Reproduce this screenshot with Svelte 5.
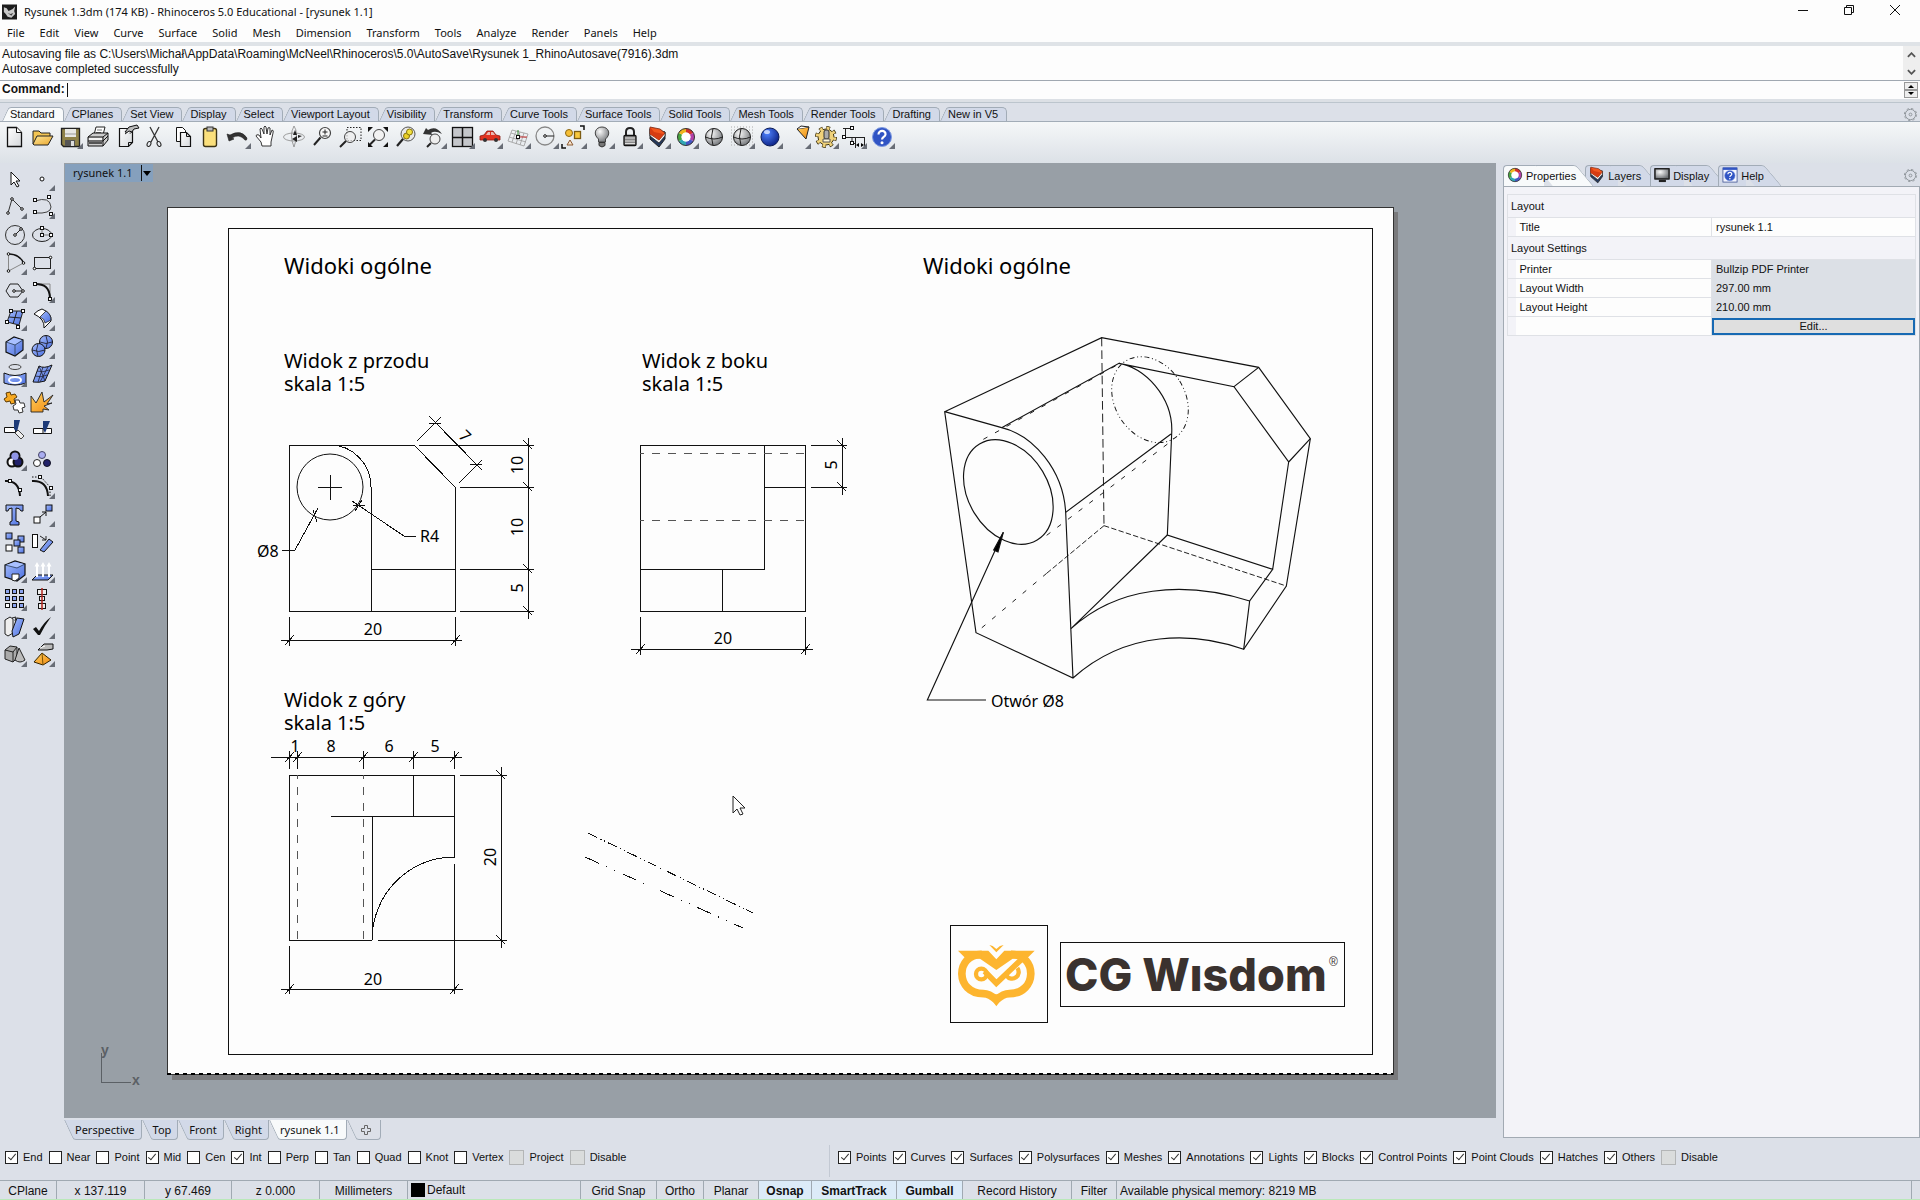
<script>
  const menus = ['File', 'Edit', 'View', 'Curve', 'Surface', 'Solid', 'Mesh', 'Dimension', 'Transform', 'Tools', 'Analyze', 'Render', 'Panels', 'Help'];

  const toolTabs = ['Standard', 'CPlanes', 'Set View', 'Display', 'Select', 'Viewport Layout', 'Visibility', 'Transform', 'Curve Tools', 'Surface Tools', 'Solid Tools', 'Mesh Tools', 'Render Tools', 'Drafting', 'New in V5'];

  const viewTabs = ['Perspective', 'Top', 'Front', 'Right', 'rysunek 1.1'];

  const wheel = `<g fill="none" stroke-width="4"><path stroke="#d3322c" d="M14 7.5a6.5 6.5 0 0 1 5.600 3.200"/><path stroke="#b23fa8" d="M19.600 10.700a6.500 6.500 0 0 1 0 6.600"/><path stroke="#4656c4" d="M19.600 17.300a6.500 6.500 0 0 1-5.600 3.200"/><path stroke="#31a7b5" d="M14 20.500a6.500 6.500 0 0 1-5.600-3.200"/><path stroke="#47a53e" d="M8.400 17.300a6.500 6.500 0 0 1 0-6.600"/><path stroke="#f0b51e" d="M8.400 10.700a6.500 6.500 0 0 1 5.600-3.200"/></g><circle cx="14" cy="14" r="8.500" fill="none" stroke="#333" stroke-width="1"/><circle cx="14" cy="14" r="4.500" fill="#fff"/>`;
  const layers = `<path d="M6 6v10l9 8 6-8v-7z" fill="#24385c" stroke="#222"/><path d="M6 5v8l9 7 6-7V9z" fill="#f3f3f3" stroke="#222" stroke-width=".8"/><path d="M6 4l10 2 5 4-6 7-9-6z" fill="#f2561d" stroke="#732512" stroke-width=".8"/><path d="M6 4l4 5 10 2-5 6-9-6z" fill="#d63c12"/>`;
  const help = `<circle cx="14" cy="14" r="9.500" fill="#3054c4" stroke="#7f9be0"/><path d="M10.500 11.500c0-5 7.500-4.500 7 0-.3 2.500-3.500 2.500-3.500 5" fill="none" stroke="#fff" stroke-width="2.200"/><circle cx="14" cy="19.700" r="1.500" fill="#fff"/>`;
  const ball = (fill) => `<circle cx="14" cy="14" r="8.500" fill="url(#${fill})" stroke="#222"/><path d="M5.500 14q8.500 4 17 0M13 5.500q-3 8 0 17" fill="none" stroke="#222"/>`;
  const node = (x, y) => `<rect x="${x - 1.5}" y="${y - 1.5}" width="3" height="3" fill="#fff" stroke="#111"/>`;
  const dot = (x, y) => `<circle cx="${x}" cy="${y}" r="1.300" fill="#fff" stroke="#111"/>`;
  const sq = (x, y, fill = 'url(#blue)') => `<rect x="${x}" y="${y}" width="6" height="6" fill="${fill}" stroke="#111"/>`;

  const toolbar = [
    ['New', `<path d="M7.500 4.500h9l5 5v14h-14z" fill="url(#paper)" stroke="#111" stroke-width="1.300"/><path d="M16.500 4.500v5h5" fill="#fff" stroke="#111"/>`],
    ['Open', `<path d="M5 21V8h6l2 2h9v4" fill="#f3c553" stroke="#222"/><path d="M5 21l4-8h16l-5 9H6z" fill="url(#yellow)" stroke="#222"/>`],
    ['Save', `<path d="M5.500 5.500h18v18h-16l-2-2z" fill="#8f8248" stroke="#222" stroke-width="1.300"/><rect x="9" y="6" width="11" height="8" fill="#e8e8e4"/><path d="M9 11h11" stroke="#999"/><rect x="9" y="17" width="10" height="6" fill="#555"/><rect x="15" y="18" width="3" height="5" fill="#ddd"/>`, 1],
    ['Print', `<path d="M10 12l2-8h9l-2 8" fill="#fff" stroke="#222"/><path d="M13 7h5M12 9.500h5" stroke="#777"/><path d="M4 14l5-4h15v7l-5 6H4z" fill="#ccc" stroke="#111"/><path d="M4 14h15l5-4M4 18h15l5-5M19 14v9" fill="none" stroke="#111"/><path d="M5 20h13" stroke="#555" stroke-width="2"/><path d="M5 16h13" stroke="#f2f2f2" stroke-width="2"/>`],
    ['Document Properties', `<path d="M7.500 5.500h13v14l-4 4h-9z" fill="url(#paper)" stroke="#111" stroke-width="1.200"/><path d="M16.500 23.500v-4h4" fill="none" stroke="#111"/><path d="M13 9l4-5 8-2 2 3-5 1-3 4z" fill="#bbb" stroke="#111"/><path d="M13 11l4-3 3 1" fill="#fff" stroke="#111"/>`],
    ['Cut', `<path d="M10 4l8 15M19 4l-8 15" stroke="#333" stroke-width="1.300" fill="none"/><ellipse cx="9" cy="21" rx="1.800" ry="2.600" fill="none" stroke="#222" transform="rotate(25 9 21)"/><ellipse cx="19" cy="21" rx="1.800" ry="2.600" fill="none" stroke="#222" transform="rotate(-25 19 21)"/>`],
    ['Copy', `<path d="M8.500 4.500h6l3 3v11h-9z" fill="#fff" stroke="#111"/><path d="M12.500 9.500h6l4 4v10h-10z" fill="url(#paper)" stroke="#111" stroke-width="1.200"/><path d="M18.500 9.500v4h4" fill="none" stroke="#111"/>`],
    ['Paste', `<rect x="7.500" y="5.500" width="13" height="18" rx="2" fill="#fbe07c" stroke="#3d3415" stroke-width="1.400"/><rect x="11" y="4" width="6" height="4" fill="#bbb" stroke="#333"/>`],
    ['Undo', `<path d="M3 11l2 7 5-2-2-1q7-5 13 2 2 1 2-2-6-9-17-3z" fill="#333" stroke="#222" stroke-width=".6"/>`, 1],
    ['Pan', `<path d="M10 23l-1-4-5-6q0-2 3-1l2 3-1-9q1-2 2 0l2 5V4q1-2 2 0l1 7 1-6q1-1 2 0v7l2-5q2 0 1 3l-2 9v4z" fill="#fff" stroke="#222" stroke-width=".9"/>`],
    ['Rotate View', `<path d="M14 3q-5 9 0 21M14 3q5 7 0 21" fill="none" stroke="#888" stroke-width=".8"/><ellipse cx="14" cy="14" rx="10.500" ry="4" fill="none" stroke="#888" stroke-width=".8"/><path d="M12 16l5-3v6zM22 13l-4-1v3zM15 7l2 5h-4z" fill="#222"/>`],
    ['Zoom Dynamic', `<circle cx="17" cy="10" r="5.500" fill="#f7f7f7" stroke="#444" stroke-width="1.200"/><path d="M12.500 14.500L6 22" stroke="#222" stroke-width="2"/><path d="M14.500 9h5M17 6.500v5M14.500 13h5" stroke="#222"/>`],
    ['Zoom Window', `<rect x="11" y="4.500" width="14" height="13" fill="none" stroke="#222" stroke-dasharray="1.500 1.500"/><circle cx="14" cy="14" r="5.500" fill="#eee" fill-opacity=".7" stroke="#444"/><path d="M10 18l-6 6" stroke="#222" stroke-width="2"/>`],
    ['Zoom Extents', `<circle cx="15" cy="12" r="5.500" fill="#f2f2f2" stroke="#444"/><path d="M11 16.500l-5 5" stroke="#222" stroke-width="2"/><path d="M4 9V4h5zM19 4h5v5zM4 19v5h5zM24 19v5h-5z" fill="#111"/>`],
    ['Zoom Selected', `<circle cx="16" cy="11" r="7" fill="#e8e8e8" stroke="#555"/><path d="M11 16l-6 7" stroke="#222" stroke-width="2.200"/><circle cx="14.500" cy="13" r="3" fill="#e9cf26" stroke="#86720b"/><circle cx="17.500" cy="9" r="3" fill="#f3e23d" stroke="#86720b"/>`],
    ['Undo View Change', `<path d="M3 11l3-6 2 2q8-5 14 4-7-4-11-1l2 2z" fill="#333"/><circle cx="15" cy="16" r="5" fill="#eee" stroke="#444"/><path d="M11 20l-4 4" stroke="#222" stroke-width="2"/>`, 1],
    ['4 Viewports', `<rect x="4.500" y="4.500" width="20" height="19" fill="#c4c6ca" stroke="#111" stroke-width="1.300"/><path d="M14.500 4v20M4 14.500h21" stroke="#111" stroke-width="1.500"/>`, 1],
    ['Set View', `<path d="M4 17v-4l4-1 3-4h6l3 4 4 1v4z" fill="#e0331f" stroke="#8a1b10" stroke-width=".8"/><path d="M10 12l2-3h2v3zM15 9h2l2 3h-4z" fill="#e9b9b2"/><circle cx="9" cy="17" r="2" fill="#333"/><circle cx="20" cy="17" r="2" fill="#333"/>`, 1],
    ['CPlane', `<g fill="none" stroke="#9a9a9a" stroke-width=".8"><path d="M8 7l16 4-4 12-16-5zM12 8l-4 11M16 9l-4 12M20 10l-4 12M7 10l16 5M5 14l17 5"/></g><path d="M14 14h9" stroke="#c33"/><path d="M14 14V7" stroke="#383"/>${node(14, 14)}`, 1],
    ['Circle', `<circle cx="13" cy="13" r="9" fill="none" stroke="#888" stroke-width="1.300"/><path d="M13 13h9" stroke="#222"/>${dot(13, 13)}`, 1],
    ['Select', `<circle cx="9" cy="10" r="3.500" fill="#f6bf35" stroke="#8a6614"/><rect x="14.500" y="8.500" width="6" height="7" fill="#f8c83e" stroke="#7c5b12" stroke-width="1.300"/><path d="M10 17l3 5H7z" fill="#f6e3cc" stroke="#8c5a32"/><path d="M20 3h4v4M2 21v4h4" fill="none" stroke="#111" stroke-width="1.500"/>`, 1],
    ['Hide', `<path d="M10.500 16c-6-5-3-12 3.500-12s9.500 7 3.500 12v3h-7z" fill="url(#gray)" stroke="#444"/><path d="M11 19.500h6v3q-3 3-6 0z" fill="#777" stroke="#333"/>`, 1],
    ['Lock', `<path d="M10 13V9q0-4 4-4t4 4v4" fill="none" stroke="#222" stroke-width="2"/><rect x="8" y="12.500" width="12" height="10" rx="1" fill="#888" stroke="#111" stroke-width="1.300"/><path d="M9 15h10M9 18h10M9 20.500h10" stroke="#ddd"/>`, 1],
    ['Layers', layers, 1],
    ['Object Properties', wheel, 1],
    ['Shade', ball('gray')],
    ['Shaded Viewport', `<path d="M3 4h22M3 7h22M3 10h22M3 13h22M3 16h22M3 19h22M3 22h22" stroke="#aaa" stroke-dasharray="1 2"/>${ball('gray')}`, 1],
    ['Render', `<circle cx="14" cy="14" r="9" fill="url(#deep)" stroke="#0b1b55"/><ellipse cx="11" cy="9" rx="3" ry="2" fill="#dfe9ff" opacity=".8"/>`, 1],
    ['Spotlight', `<path d="M13 6l12-2-3 12z" fill="url(#orange)" stroke="#222"/><path d="M13 6l4-3 8 1" fill="#fff" stroke="#222"/>`, 1],
    ['Options', `<circle cx="14" cy="14" r="8.500" fill="none" stroke="#3d320f" stroke-width="5" stroke-dasharray="3.400 3.280"/><circle cx="14" cy="14" r="8" fill="#f0d27a" stroke="#3d320f"/><circle cx="14" cy="14" r="8.500" fill="none" stroke="#f0d27a" stroke-width="3.500" stroke-dasharray="2.600 4.080" stroke-dashoffset="-.4"/><rect x="12" y="7" width="5" height="9" rx="2" fill="#aaa" stroke="#333"/><path d="M11 16h7v3h-7z" fill="#fff8d8" stroke="#555"/>`, 1],
    ['Dimension', `<path d="M5.500 5v10M3 5.500h10M3 14.500h9v6h4M15.500 14v11M24.500 14v11M12 14.500h12" fill="none" stroke="#222"/>${node(12, 5)}${node(4, 14)}${node(12, 20)}<path d="M16 22l3-2v4zM24 22l-3-2v4z"/>`, 1],
    ['Help', help, 1]
  ];

  const sideTools = [
    ['Cancel', `<path d="M11 7v13l3-3 3 5 2-1-3-5h4z" fill="#fff" stroke="#111"/>`],
    ['Point', `<circle cx="14" cy="14" r="2" fill="#fff" stroke="#111"/>`, 1],
    ['Polyline', `<path d="M8 20l4-14 10 10" fill="none" stroke="#333"/>${dot(8, 20)}${dot(12, 6)}${dot(22, 16)}`, 1],
    ['Curve', `<path d="M7 8q15-5 16 6 0 7-16 6" fill="none" stroke="#444"/>${node(7, 7)}${node(21, 4)}${node(7, 19)}${node(23, 21)}`, 1],
    ['Circle', `<circle cx="15" cy="14" r="9.500" fill="none" stroke="#333"/><path d="M15 14l6-6" stroke="#222"/>${dot(15, 14)}${dot(21, 8)}`, 1],
    ['Ellipse', `<ellipse cx="14" cy="14" rx="9.500" ry="6.500" fill="none" stroke="#222"/><path d="M14 14h9M14 14V7" stroke="#777"/>${node(14, 14)}${node(14, 7)}${node(23, 14)}`, 1],
    ['Arc', `<path d="M8.500 5v17l15-8" fill="none" stroke="#888"/><path d="M8.500 5q11 0 15 9" fill="none" stroke="#111" stroke-width="1.500"/>${dot(8.5, 5)}${dot(8.5, 22)}${dot(23.5, 14)}`, 1],
    ['Rectangle', `<rect x="6.500" y="8.500" width="16" height="11" fill="none" stroke="#222"/>${dot(6.5, 19.5)}${dot(22.5, 8.5)}`, 1],
    ['Polygon', `<path d="M6 14l4-7h8l5 7-5 6h-8z" fill="none" stroke="#222"/><path d="M14 14h9" stroke="#222"/>${dot(14, 14)}${dot(23, 14)}`, 1],
    ['Fillet', `<path d="M7 7h15v15" fill="none" stroke="#888"/><path d="M7 7c9 0 15 3 15 15" fill="none" stroke="#111" stroke-width="2"/>${node(7, 7)}${node(22, 22)}`, 1],
    ['Surface from Points', `<path d="M11 6h12l-4 14-12-3z" fill="url(#blue)" stroke="#222"/><path d="M17 6l-4 13M9 12l12 1" stroke="#222"/>${node(11, 6)}${node(23, 6)}${node(7, 17)}${node(18, 22)}`, 1],
    ['Sweep', `<path d="M6 9q4-4 8-5 10 4 9 12l-7 7q1-9-10-14z" fill="#fff" stroke="#111"/><path d="M12 12l6-6q5 3 5 9l-6 3q0-4-5-6z" fill="url(#blue)" stroke="#222" stroke-width=".8"/>`, 1],
    ['Box', `<path d="M6 9l8-5 9 3v10l-8 6-9-4z" fill="url(#blue)" stroke="#111" stroke-width="1.200"/><path d="M7 9l7-4 8 2-7 4.500z" fill="#a9c0ff"/><path d="M6 9l9 3v11M15 12l8-5" fill="none" stroke="#234" stroke-width=".7"/>`, 1],
    ['Boolean Union', `<circle cx="18" cy="9" r="6.500" fill="url(#blue)" stroke="#111"/><circle cx="10.500" cy="17" r="6.500" fill="url(#blue)" stroke="#111"/><path d="M4 17q7 3 13 0M10 11q-3 6 0 12M12 9q6 3 12 0M18 3q3 6 0 12" fill="none" stroke="#223" stroke-width=".9"/>`, 1],
    ['Project', `<ellipse cx="15" cy="6" rx="6" ry="2.500" fill="none" stroke="#444"/><path d="M4 12q11 5 22 0v10q-11 4-22 0z" fill="url(#blue)" stroke="#111"/><ellipse cx="15" cy="19" rx="6" ry="3" fill="none" stroke="#fff" stroke-width="2"/>`, 1],
    ['Mesh', `<path d="M11 5q5 3 13-1l-7 16q-6 2-12 1z" fill="url(#blue)" stroke="#111"/><path d="M9 10q6 2 12-1M7 15q6 2 12-1M15 6l-5 15M20 6l-8 15M11 5l6 15" fill="none" stroke="#223" stroke-width=".8"/>`, 1],
    ['Join', `<path d="M4 10l3-2-1-4 4-1 1 3 4-1 2 3-3 2 1 4-4 1-1-3-4 1z" fill="#f7a921" stroke="#5b3a05"/><path d="M13 17l3-2-1-4 4 0 1 3 4 0 1 4-3 1 1 4-4 1-1-3-4 0z" fill="#fff" stroke="#333"/>`],
    ['Explode', `<path d="M3 23V7l5 7 6-11 2 10 9-7-6 9 5-1-8 3 5 4-6-1v3z" fill="url(#orange)" stroke="#222" stroke-width=".9"/>`],
    ['Trim', `<path d="M4.500 10.500h11v5h-11z" fill="#fff" stroke="#111"/><path d="M14 3h6l-3 12-3-3z" fill="#1c3a78"/><path d="M15 16l3-3 6 6-3 3z" fill="#eee" stroke="#444"/>`],
    ['Split', `<path d="M5.500 11.500h18v5h-18z" fill="#fff" stroke="#111"/><path d="M15 4h7l-5 12-2-4z" fill="#1c3a78"/><path d="M15 12v4" stroke="#111"/>`],
    ['Group', `<circle cx="15" cy="11" r="4.500" fill="#a9adf0" stroke="#111" stroke-width="2"/><circle cx="12" cy="17" r="4.500" fill="#fff" stroke="#111" stroke-width="2"/><circle cx="18" cy="17" r="4.500" fill="#22226a" stroke="#111" stroke-width="2"/><circle cx="15" cy="11.500" r="3.500" fill="#8f94e6"/>`, 1],
    ['Ungroup', `<circle cx="14" cy="10" r="3.500" fill="#a9adf0" stroke="#446"/><circle cx="9" cy="18" r="3.500" fill="#fff" stroke="#222"/><circle cx="19" cy="18" r="3.500" fill="#22226a" stroke="#112"/>`],
    ['Edit Points', `<path d="M5 8q14-1 15 15" fill="none" stroke="#111" stroke-width="2"/>${node(10, 8)}${node(20, 17)}`],
    ['Control Points', `<path d="M4 4h9l9 10v9" fill="none" stroke="#111" stroke-dasharray="1.500 1.500"/><path d="M4 8q15-1 16 15" fill="none" stroke="#111" stroke-width="2"/>${node(12, 4)}${node(23, 15)}`, 1],
    ['Text', `<path d="M6 4h17v6h-2q-1-3-5-3v13l3 1v3h-9v-3l2-1V7q-4 0-4 3H6z" fill="url(#blue)" stroke="#111"/>`],
    ['Move', `${sq(18, 4)}${sq(6, 16, '#fff')}<path d="M12 16l6-5M14 11h4v4" fill="none" stroke="#111"/>`, 1],
    ['Copy', `${sq(6, 4)}${sq(18, 7)}${sq(14, 11)}${sq(18, 18)}${sq(6, 16, '#fff')}`],
    ['Rotate', `<rect x="4.500" y="5.500" width="5" height="13" fill="#fff" stroke="#111"/><path d="M12 21l9-11 4 3-9 10z" fill="url(#blue)" stroke="#111"/><path d="M12 7l6 4M18 7v4h-4" fill="none" stroke="#222"/>`],
    ['Solid Editing', `<path d="M5 8l10-4 10 3v11l-8 6-12-4z" fill="url(#blue)" stroke="#111" stroke-width="1.200"/><path d="M6 8l9-3 9 2-7 3.500z" fill="#a9c0ff"/><path d="M5 8l12 3 8-4" fill="none" stroke="#234" stroke-width=".7"/><path d="M12 17h7v4l-4 3-3-1z" fill="#fff" stroke="#222"/>`, 1],
    ['Extrude', `<path d="M4 23l5-5h16l-5 5z" fill="url(#blue)" stroke="#111"/><path d="M9 20V8M15 20V8M21 20V8" stroke="#fff" stroke-width="2"/><path d="M6.500 9.500L9 5l2.500 4.500zM12.500 9.500L15 5l2.500 4.500zM18.500 9.500L21 5l2.500 4.500z" fill="#fff"/>`, 1],
    ['Array', [5, 12, 19].flatMap((x) => [5, 12, 19].map((y) => `<rect x="${x + 0.5}" y="${y - 0.5}" width="4" height="4" fill="${x === 5 && y === 19 ? '#fff' : '#8aa3f0'}" stroke="#111"/>`)).join(''), 1],
    ['Align', `<rect x="9.500" y="4.500" width="9" height="5" fill="#eee" stroke="#111"/><rect x="11.500" y="11.500" width="5" height="4" fill="#eee" stroke="#111"/><rect x="10.500" y="18.500" width="7" height="5" fill="#eee" stroke="#111"/><path d="M14 3v22" stroke="#b3261e" stroke-width="1.500"/>`, 1],
    ['Flow', `<path d="M5 7l5-3 3 2v14l-5 3-3-2z" fill="#eee" stroke="#222"/><path d="M12 18l5-13 7 1-5 15-6 3z" fill="url(#blue)" stroke="#111"/><path d="M12 5l4-1-1 4" fill="none" stroke="#222"/>`, 1],
    ['Check', `<path d="M5 16l3-2 3 4q5-9 12-14-6 8-11 18h-2z" fill="#111"/>`, 1],
    ['Solids', `<path d="M5 9l5-4 7 1v11l-4 4-8-3z" fill="#aaa" stroke="#222"/><path d="M5 9l8 2v10M13 11l4-5" fill="none" stroke="#222"/><path d="M19 7l6 12q-5 4-10 0z" fill="#bbb" stroke="#222"/>`, 1],
    ['Drape', `<path d="M6 21l8-9 9 7-8 5z" fill="url(#orange)" stroke="#332200"/><path d="M14 12l1 12" stroke="#7a5205"/><path d="M10 9l6-6 9 0v5l-6 1z" fill="#bbb" stroke="#111"/><path d="M12 7l5-2" stroke="#fff"/>`, 1]
  ];

  const panelTabs = [
    ['Properties', wheel],
    ['Layers', layers],
    ['Display', `<rect x="4" y="5" width="20" height="15" rx="1" fill="#222"/><rect x="6" y="7" width="16" height="11" fill="url(#gray)"/><path d="M10 23h9v-3h-9z" fill="#222"/>`],
    ['Help', `<rect x="5" y="5" width="18" height="18" fill="#f4f6ff" stroke="#3c4f92"/><path d="M5 6h18" stroke="#3054c4" stroke-width="3"/><g transform="translate(4 5) scale(.7)">${help}</g>`]
  ];

  const settings = [
    ['Printer', 'Bullzip PDF Printer'],
    ['Layout Width', '297.00 mm'],
    ['Layout Height', '210.00 mm']
  ];

  // label, checked, disabled
  const osnaps = [['End', 1], ['Near'], ['Point'], ['Mid', 1], ['Cen'], ['Int', 1], ['Perp'], ['Tan'], ['Quad'], ['Knot'], ['Vertex'], ['Project', 0, 1], ['Disable', 0, 1]];
  const filters = [['Points', 1], ['Curves', 1], ['Surfaces', 1], ['Polysurfaces', 1], ['Meshes', 1], ['Annotations', 1], ['Lights', 1], ['Blocks', 1], ['Control Points', 1], ['Point Clouds', 1], ['Hatches', 1], ['Others', 1], ['Disable', 0, 1]];

  const toggles = [['Grid Snap'], ['Ortho'], ['Planar'], ['Osnap', 1], ['SmartTrack', 1], ['Gumball', 1], ['Record History'], ['Filter']];

  // dimension lines: position, start, end, ticks
  const hDims = [
    { y: 640, x1: 281, x2: 462, ticks: [289, 455] },
    { y: 649, x1: 631, x2: 813, ticks: [640, 805] },
    { y: 757, x1: 271, x2: 462, ticks: [289, 297, 363, 413, 454] },
    { y: 989, x1: 281, x2: 463, ticks: [289, 454] }
  ];
  const vDims = [
    { x: 528, y1: 438, y2: 619, ticks: [445, 487, 569, 611] },
    { x: 842, y1: 438, y2: 495, ticks: [445, 487] },
    { x: 501, y1: 767, y2: 948, ticks: [775, 940] }
  ];
  const dimTexts = [
    ['20', 373, 635], ['20', 723, 644], ['20', 373, 985],
    ['1', 295, 752], ['8', 331, 752], ['6', 389, 752], ['5', 435, 752]
  ];
  const sideTexts = [['10', 523, 465], ['10', 523, 527], ['5', 523, 588], ['5', 837, 465], ['20', 496, 857]];
  const views = [['Widok z przodu', 284, 368], ['Widok z boku', 642, 368], ['Widok z góry', 284, 707]];
</script>

{#snippet icon(body, corner)}
  <svg viewBox="0 0 28 28" aria-hidden="true">
    {@html body}
    {#if corner}<path d="M27 20v6h-6z" fill="#686d76" />{/if}
  </svg>
{/snippet}

{#snippet cog()}
  <svg class="cog" viewBox="0 0 16 16" aria-hidden="true">
    <circle cx="8" cy="8" r="5.500" fill="none" stroke="#8d9399" />
    <circle cx="8" cy="8" r="6.500" fill="none" stroke="#8d9399" stroke-dasharray="2.500 2.600" />
    <circle cx="8" cy="8" r="1.500" fill="none" stroke="#8d9399" />
  </svg>
{/snippet}

{#snippet check([name, on, off])}
  <label class="check" class:off>
    <input type="checkbox" checked={!!on} disabled={!!off} />
    {name}
  </label>
{/snippet}

<div class="app">
  <header class="title">
    <svg class="logo" viewBox="0 0 16 16" aria-hidden="true">
      <rect width="16" height="16" fill="#1c1c1c" />
      <path d="M2 3l3 1 2 3 4-2 3-3-1 5 1 3-4 4-4-1-2-3-2-2z" fill="#c9c9c9" />
      <path d="M6 9l3 1 3-1-2 3z" fill="#444" />
    </svg>
    <span>Rysunek 1.3dm (174 KB) - Rhinoceros 5.0 Educational - [rysunek 1.1]</span>
    <div class="window-buttons">
      <button aria-label="Minimize"><svg viewBox="0 0 12 12"><path d="M1 6.500h10" /></svg></button>
      <button aria-label="Restore"><svg viewBox="0 0 12 12"><path d="M1.500 3.500h7v7h-7zM3.500 3.500v-2h7v7h-2" /></svg></button>
      <button aria-label="Close"><svg viewBox="0 0 12 12"><path d="M1 1l10 10M11 1L1 11" /></svg></button>
    </div>
  </header>

  <nav class="menu">
    {#each menus as item}
      <button>{item}</button>
    {/each}
  </nav>

  <section class="command">
    <div class="history">
      <div class="lines">
        <p>Autosaving file as C:\Users\Michał\AppData\Roaming\McNeel\Rhinoceros\5.0\AutoSave\Rysunek 1_RhinoAutosave(7916).3dm</p>
        <p>Autosave completed successfully</p>
      </div>
      <div class="scroll">
        <button aria-label="Scroll up"><svg viewBox="0 0 10 6"><path d="M1 5l4-4 4 4" /></svg></button>
        <button aria-label="Scroll down"><svg viewBox="0 0 10 6"><path d="M1 1l4 4 4-4" /></svg></button>
      </div>
    </div>
    <div class="prompt">
      <label for="cmd">Command:</label>
      <span class="caret"></span>
      <input id="cmd" type="text" />
      <div class="spin">
        <button aria-label="Previous"><svg viewBox="0 0 6 4"><path d="M0 4l3-3 3 3z" /></svg></button>
        <button aria-label="Next"><svg viewBox="0 0 6 4"><path d="M0 0l3 3 3-3z" /></svg></button>
      </div>
    </div>
  </section>

  <div class="tool-tabs">
    {#each toolTabs as tab, i}
      <button class="tab" class:active={i === 0}>{tab}</button>
    {/each}
    {@render cog()}
  </div>

  <div class="toolbar">
    {#each toolbar as [name, body, corner]}
      <button class="tool" aria-label={name}>{@render icon(body, corner)}</button>
    {/each}
  </div>

  <main>
    <aside class="side">
      {#each sideTools as [name, body, corner]}
        <button class="tool" aria-label={name}>{@render icon(body, corner)}</button>
      {/each}
    </aside>

    <section class="work">
      <div class="viewport">
        <button class="view-name">rysunek 1.1<svg viewBox="0 0 12 16"><path d="M.5 0v16" stroke="#111" /><path d="M2 6h8l-4 5z" /></svg></button>
        <svg class="canvas" viewBox="64 163 1432 955">
          <defs>
            <linearGradient id="paper" x1="0" y1="0" x2="1" y2="1"><stop offset="0" stop-color="#fff" /><stop offset="1" stop-color="#d5d8db" /></linearGradient>
            <linearGradient id="yellow" x1="0" y1="0" x2="1" y2="1"><stop offset="0" stop-color="#ffe89a" /><stop offset="1" stop-color="#e8a52b" /></linearGradient>
            <linearGradient id="orange" x1="0" y1="0" x2="1" y2="1"><stop offset="0" stop-color="#ffcf5c" /><stop offset="1" stop-color="#f08a12" /></linearGradient>
            <linearGradient id="blue" x1="0" y1="0" x2="1" y2="1"><stop offset="0" stop-color="#a5bcfb" /><stop offset="1" stop-color="#4a6fe0" /></linearGradient>
            <radialGradient id="gray" cx=".35" cy=".3" r=".8"><stop offset="0" stop-color="#fafafa" /><stop offset="1" stop-color="#6b6e72" /></radialGradient>
            <radialGradient id="deep" cx=".35" cy=".3" r=".8"><stop offset="0" stop-color="#4f83ff" /><stop offset="1" stop-color="#06197a" /></radialGradient>
          </defs>

          <rect x="172" y="212" width="1226" height="868" fill="#7a7a7c" />
          <rect class="sheet" x="167" y="207" width="1226" height="867" />
          <path class="dash-edge" d="M167 1074H1393" />
          <rect class="line" x="228" y="228" width="1144" height="826" />

          <g class="line">
            <!-- front view -->
            <path d="M289 445H414L455 487V611H289ZM330 445A41 42 0 0 1 371 487V611M371 569H455" />
            <circle cx="330" cy="487" r="33" />
            <path d="M318 487h24M330 475v25" />
            <path d="M282 550h13l23-42M313 510l4 12M416 536h-12l-52-35M353 505h12M355 511l7-11" />
            <path d="M419 445H534M460 487H534M460 569H534M460 611H534M289 617v29M455 617v29" />
            <path d="M417 441l24-24M459 483l23-23M429 416l53 54M429 423h12M470 464h12" />
            <!-- side view -->
            <path d="M640 445H805V611H640ZM764 445V569H640M764 487H805M722 569V611" />
            <path d="M811 445H847M811 487H847M640 617V655M805 617V655" />
            <path class="hidden-line" d="M640 453H805M640 520H805" stroke-dashoffset="4" />
            <!-- top view -->
            <path d="M372 940H289V775H454V857A82 83 0 0 0 372 940V816M331 816H454M413 775V816" />
            <path class="hidden-line" d="M297 775V940M363 775V940" stroke-dashoffset="4" />
            <path d="M289 751v18M297 751v18M363 751v18M413 751v18M454 751v18" />
            <path d="M460 775H507M378 940H507M289 946V994M454 864V994" />
            <path d="M588 833L753 913" stroke-dasharray="10 4 1 3 1 3" />
            <path d="M585 857L743 928" stroke-dasharray="15 8 1 8 1 8" />

            {#each hDims as d}
              <path d="M{d.x1} {d.y}H{d.x2}" />
              {#each d.ticks as t}<path d="M{t - 4} {d.y + 5}l9 -10" />{/each}
            {/each}
            {#each vDims as d}
              <path d="M{d.x} {d.y1}V{d.y2}" />
              {#each d.ticks as t}<path d="M{d.x - 5} {t - 5}l9 9" />{/each}
            {/each}
          </g>

          <!-- isometric view, drawn at three times its size -->
          <g class="iso" transform="translate(900 300) scale(.33333)">
            <path d="M134 335L605 113 1076 202 1231 416 1159 858 1031 1048C880 995 680 990 519 1134L228 998ZM134 335L305 383C400 405 490 510 497 637L519 1134" />
            <path d="M305 383L657 190C730 200 822 290 815 402L802 705 1118 808 1049 903 1031 1048M497 637L813 402M657 190L1002 260 1166 486 1118 808M1002 260L1076 202M1166 486L1231 416" />
            <path d="M802 705L513 986C650 860 850 840 1049 903" />
            <ellipse cx="325" cy="576" rx="120" ry="168" transform="rotate(-31 325 576)" />
            <g class="iso-hidden">
              <ellipse cx="750" cy="299" rx="105" ry="137" transform="rotate(-32 750 299)" stroke-dasharray="15 8 3 8 3 8" />
              <path d="M605 113L612 677" stroke-dasharray="26 12" />
              <path d="M612 677L1159 858M612 677L440 820" stroke-dasharray="16 7" />
              <path d="M440 820L228 998M250 418L657 192M440 706L610 578 813 424" stroke-dasharray="14 26" />
            </g>
            <path d="M258 1200H82L310 697" />
            <path d="M310 697L281 750 294 756Z" fill="#000" />
          </g>

          <g class="head">
            <text x="284" y="274">Widoki ogólne</text>
            <text x="923" y="274">Widoki ogólne</text>
          </g>
          <g class="sub">
            {#each views as [name, x, y]}
              <text {x} {y}>{name}<tspan {x} dy="23">skala 1:5</tspan></text>
            {/each}
          </g>
          <g class="dim">
            <text x="257" y="557">Ø8</text>
            <text x="420" y="542">R4</text>
            <text x="991" y="707">Otwór Ø8</text>
          </g>
          <g class="dim mid">
            {#each dimTexts as [t, x, y]}<text {x} {y}>{t}</text>{/each}
            {#each sideTexts as [t, x, y]}<text transform="translate({x} {y}) rotate(-90)">{t}</text>{/each}
            <text transform="translate(461 440) rotate(45)">7</text>
          </g>

          <!-- logo -->
          <g class="line">
            <rect x="950" y="925" width="97" height="97" />
            <rect x="1060" y="942" width="284" height="64" />
          </g>
          <g class="owl" transform="translate(920 900) scale(.33333)">
            <path class="solid" d="M208 135l10 3 11 9 11-9 11-3-22 22z" />
            <path class="solid" d="M114 152h91l24 26 24-26h91l-24 24h-42l-49 34-49-34h-42z" />
            <path class="solid" d="M203 283l26 36 26-36z" />
            <path d="M185 163C105 163 105 281 190 281Q208 281 229 300 250 281 268 281C353 281 353 163 273 163" stroke-width="23" />
            <circle cx="184" cy="222" r="16" stroke-width="13" />
            <path d="M292 204a18 18 0 1 1-32 24" stroke-width="13" />
            <path d="M194 214l35 36 84-80" stroke-width="17" />
          </g>
          <text class="brand" x="1065" y="991">CG Wısdom</text>
          <text class="reg" x="1329" y="966">®</text>

          <path d="M733 796v17l4-4 3 6 3-1-3-6h5z" fill="#fff" stroke="#222" />
          <g class="ucs">
            <path d="M101 1053V1082H131" />
            <text x="101" y="1055">y</text>
            <text x="132" y="1085">x</text>
          </g>
        </svg>
      </div>
      <div class="view-tabs">
        {#each viewTabs as tab, i}
          <button class="tab" class:active={i === 4}>{tab}</button>
        {/each}
        <button class="tab add" aria-label="New viewport"><svg viewBox="0 0 10 10"><path d="M3.500 .5h3v3h3v3h-3v3h-3v-3h-3v-3h3z" /></svg></button>
      </div>
    </section>

    <aside class="panel">
      <div class="panel-tabs">
        {#each panelTabs as [name, body], i}
          <button class="tab" class:active={i === 0}>{@render icon(body)}{name}</button>
        {/each}
        {@render cog()}
      </div>
      <div class="panel-body">
        <table>
          <colgroup>
            <col class="col-gutter" />
            <col class="col-name" />
            <col />
          </colgroup>
          <tbody>
            <tr class="group"><th colspan="3">Layout</th></tr>
            <tr><td class="gutter"></td><td><label for="layout-title">Title</label></td><td><input id="layout-title" type="text" value="rysunek 1.1" /></td></tr>
            <tr class="group"><th colspan="3">Layout Settings</th></tr>
            {#each settings as [name, value]}
              <tr><td class="gutter"></td><td>{name}</td><td class="locked">{value}</td></tr>
            {/each}
            <tr><td class="gutter"></td><td></td><td class="locked edit"><button>Edit...</button></td></tr>
          </tbody>
        </table>
      </div>
    </aside>
  </main>

  <div class="osnap">
    <div class="checks snaps">
      {#each osnaps as item}{@render check(item)}{/each}
    </div>
    <div class="checks">
      {#each filters as item}{@render check(item)}{/each}
    </div>
  </div>

  <footer class="status">
    <button>CPlane</button>
    <span>x 137.119</span>
    <span>y 67.469</span>
    <span>z 0.000</span>
    <span>Millimeters</span>
    <button class="layer"><i></i>Default</button>
    {#each toggles as [name, on]}
      <button class:on>{name}</button>
    {/each}
    <span class="memory">Available physical memory: 8219 MB</span>
    <span></span>
  </footer>
</div>

<style>
  :global(body) {
    margin: 0;
    background: #dce0e8;
  }

  .app {
    display: flex;
    flex-direction: column;
    height: 100vh;
    overflow: hidden;
    color: #111;
    font: 11px/14px "Liberation Sans", Arial, sans-serif;
    background: #dce0e8;
  }

  button, input {
    margin: 0;
    padding: 0;
    border: 0;
    background: none;
    color: inherit;
    font: inherit;
    border-radius: 0;
    outline: 0;
  }

  p { margin: 0; }

  .title {
    display: flex;
    align-items: center;
    gap: 7px;
    height: 24px;
    flex: none;
    background: #fdfdfd;
    font: 11px/16px "Noto Sans", "Open Sans", sans-serif;
  }

  .logo {
    width: 15px;
    height: 16px;
    margin-left: 2px;
  }

  .window-buttons {
    display: flex;
    margin: 0 2px 0 auto;
  }

  .window-buttons button {
    width: 46px;
    height: 20px;
  }

  .window-buttons svg {
    width: 12px;
    height: 12px;
    fill: none;
    stroke: #111;
  }

  .menu {
    display: flex;
    gap: 15px;
    height: 18px;
    flex: none;
    padding-left: 7px;
    background: #fdfdfd;
    font: 11px/18px "Noto Sans", "Open Sans", sans-serif;
  }

  .command {
    flex: none;
    border-top: 4px solid #dfe3e7;
    border-bottom: 3px solid #dce0e5;
    background: #fdfdfd;
    font-size: 12px;
  }

  .history {
    display: flex;
    height: 34px;
    border-bottom: 1px solid #a0a8b1;
  }

  .lines {
    flex: 1;
    padding: 1px 0 0 2px;
    line-height: 15px;
  }

  .scroll {
    display: flex;
    flex-direction: column;
    width: 17px;
    background: #eee;
  }

  .scroll button {
    display: grid;
    place-items: center;
    height: 17px;
  }

  .scroll svg {
    width: 9px;
    height: 6px;
    fill: none;
    stroke: #555;
    stroke-width: 2;
  }

  .prompt {
    display: flex;
    align-items: center;
    height: 18px;
    padding-left: 2px;
    padding-right: 2px;
  }

  .prompt label {
    font-weight: bold;
    line-height: 12px;
    padding-bottom: 2px;
  }

  .caret {
    width: 1px;
    height: 14px;
    margin-left: 2px;
    background: #111;
  }

  .prompt input { flex: 1; }

  .spin button {
    display: grid;
    place-items: center;
    width: 14px;
    height: 8px;
    border: 1px solid #999;
    background: #eee;
  }

  .spin svg {
    width: 6px;
    height: 4px;
  }

  /* tabs are built from a slanted half and a square half */
  .tab {
    position: relative;
    isolation: isolate;
    display: flex;
    align-items: center;
    white-space: nowrap;
  }

  .tab::before, .tab::after {
    content: "";
    position: absolute;
    z-index: -1;
    top: 0;
    bottom: 0;
    box-sizing: border-box;
    background: #d2d9e8;
    border: 0 solid #a2acb7;
  }

  .tab::before { left: 0; right: 50%; }
  .tab::after { left: 50%; right: 0; }

  .tool-tabs {
    display: flex;
    height: 14px;
    flex: none;
    padding: 4px 2px 0 2px;
    border-top: 1px solid #bcc5cd;
    border-bottom: 1px solid #a2acb7;
  }

  .tool-tabs .tab { padding: 0 9px 0 8px; }

  .tool-tabs .tab::before {
    border-width: 1px 0 0 1px;
    border-radius: 3px 0 0 0;
    transform: skewX(-25deg);
    transform-origin: 0 100%;
  }

  .tool-tabs .tab::after {
    border-width: 1px 1px 0 0;
    border-radius: 0 5px 0 0;
  }

  .tab.active { z-index: 1; }

  .tool-tabs .tab.active::before,
  .tool-tabs .tab.active::after,
  .panel-tabs .tab.active::before,
  .panel-tabs .tab.active::after,
  .view-tabs .tab.active::before,
  .view-tabs .tab.active::after { background: #f8fafb; }

  .cog {
    width: 15px;
    height: 15px;
    margin-left: auto;
  }

  .toolbar {
    display: flex;
    align-items: flex-start;
    height: 40px;
    flex: none;
    padding-top: 1px;
    background: linear-gradient(#f5f7f8, #dce1e7);
  }

  .tool { width: 28px; height: 28px; }

  .tool svg {
    display: block;
    width: 28px;
    height: 28px;
  }

  main {
    display: flex;
    flex: 1;
    min-height: 0;
  }

  .side {
    display: grid;
    grid-template-columns: 28px 28px;
    grid-auto-rows: 28px;
    width: 64px;
    flex: none;
    padding-top: 2px;
    box-sizing: border-box;
  }

  .work {
    display: flex;
    flex-direction: column;
    flex: 1;
    min-width: 0;
  }

  .viewport {
    position: relative;
    display: flex;
    flex: 1;
    min-height: 0;
    background: #989fa6;
  }

  .canvas {
    width: 100%;
    height: 100%;
  }

  .view-name {
    position: absolute;
    top: 1px;
    left: 1px;
    display: flex;
    align-items: center;
    gap: 8px;
    height: 18px;
    padding-left: 8px;
    background: #85a0bd;
    font: 11px/18px "Noto Sans", "Open Sans", sans-serif;
  }

  .view-name svg {
    width: 12px;
    height: 16px;
  }

  .sheet {
    fill: #fdfdfd;
    stroke: #333;
    shape-rendering: crispEdges;
  }

  .dash-edge {
    stroke: #000;
    stroke-width: 2;
    stroke-dasharray: 4 4;
    shape-rendering: crispEdges;
  }

  .line {
    fill: none;
    stroke: #111;
    shape-rendering: crispEdges;
  }

  .line circle { shape-rendering: auto; }

  .hidden-line {
    stroke: #555;
    stroke-dasharray: 8 8;
  }

  .iso {
    fill: none;
    stroke: #111;
    stroke-width: 3.4;
  }

  .iso-hidden { stroke-width: 2.8; }

  .head, .sub, .dim { font-family: "Noto Sans", "Open Sans", sans-serif; }
  .head { font-size: 22px; }
  .sub { font-size: 20px; }
  .dim { font-size: 16px; }
  .mid { text-anchor: middle; }

  .owl {
    fill: none;
    stroke: #fdb52f;
  }

  .owl .solid {
    fill: #fdb52f;
    stroke: none;
  }

  .brand {
    font: 800 45px Inter, sans-serif;
    fill: #3a322f;
  }

  .reg {
    font: 12px "Liberation Sans", sans-serif;
    fill: #3a322f;
  }

  .ucs path {
    fill: none;
    stroke: #5b6065;
    shape-rendering: crispEdges;
  }

  .ucs text {
    font: bold 14px "Liberation Sans", sans-serif;
    fill: #5b6065;
  }

  .view-tabs {
    display: flex;
    height: 20px;
    flex: none;
    padding: 2px 0;
    font: 11px/18px "Noto Sans", "Open Sans", sans-serif;
  }

  .view-tabs .tab { padding: 0 7px 0 11px; }

  .view-tabs .tab::before {
    border-width: 0 0 1px 1px;
    border-radius: 0 0 0 3px;
    transform: skewX(25deg);
    transform-origin: 0 0;
  }

  .view-tabs .tab::after {
    border-width: 0 1px 1px 0;
    border-radius: 0 0 4px 0;
  }

  .view-tabs .add::before, .view-tabs .add::after { background: #dce0e8; }

  .add svg {
    width: 10px;
    height: 10px;
    margin: 0 3px;
    fill: none;
    stroke: #666;
  }

  .panel {
    display: flex;
    flex-direction: column;
    width: 417px;
    flex: none;
    margin: 2px 0 4px 7px;
  }

  .panel-tabs {
    display: flex;
    align-items: stretch;
    height: 21px;
    padding-right: 2px;
  }

  .panel-tabs .tab { padding: 0 9px 0 1px; }

  .panel-tabs .tab svg {
    width: 22px;
    height: 22px;
    margin-top: -2px;
  }

  .panel-tabs .tab::before {
    border-width: 1px 0 0 1px;
    border-radius: 4px 0 0 0;
  }

  .panel-tabs .tab::after {
    border-width: 1px 1px 0 0;
    border-radius: 0 3px 0 0;
    transform: skewX(40deg);
    transform-origin: 100% 50%;
  }

  .panel-tabs .cog { align-self: center; }

  .panel-body {
    flex: 1;
    padding: 7px 3px;
    border: 1px solid #a2aab3;
    background: #f3f3f8;
  }

  table {
    width: 100%;
    border-collapse: collapse;
    table-layout: fixed;
    border: 1px solid #dcdfe3;
  }

  .col-gutter { width: 8px; }
  .col-name { width: 196px; }

  tr { height: 19px; }
  .group { height: 23px; }

  th {
    padding: 0 3px;
    font-weight: normal;
    text-align: left;
    border: 1px solid #dfe1e6;
  }

  td {
    box-sizing: border-box;
    padding: 0 4px;
    background: #fdfdfd;
    border: 1px solid #dfe1e6;
  }

  td.gutter {
    padding: 0;
    background: #f3f3f8;
    border-right: 0;
  }

  td:nth-child(2) { border-left: 0; }

  .locked {
    background: #dce0e6;
    border-color: #dce0e6;
  }

  td input {
    display: block;
    width: 100%;
  }

  td.edit { padding: 0; }

  .edit button {
    display: block;
    width: 100%;
    height: 17px;
    border: 2px solid #1769b3;
    background: #dfdfdf;
    line-height: 13px;
  }

  .osnap {
    display: flex;
    align-items: center;
    height: 38px;
    flex: none;
    padding-left: 5px;
  }

  .checks {
    display: flex;
    align-items: center;
    gap: 6px;
    height: 32px;
    padding-bottom: 8px;
    box-sizing: border-box;
  }

  .snaps {
    width: 825px;
    margin-right: 8px;
    border-right: 1px solid #c3c9d3;
  }

  .check {
    display: flex;
    align-items: center;
    gap: 5px;
    white-space: nowrap;
  }

  .check input {
    appearance: none;
    display: grid;
    place-items: center;
    width: 13px;
    height: 13px;
    border: 1px solid #222;
    background: #fff;
  }

  .check input:checked::before {
    content: "";
    width: 8px;
    height: 4px;
    margin-top: -3px;
    box-sizing: border-box;
    border: solid #333;
    border-width: 0 0 1px 1px;
    transform: rotate(-50deg);
  }

  .check.off input {
    width: 15px;
    height: 15px;
    border-color: #b3b5b6;
    background: #dadcdc;
  }

  .status {
    display: grid;
    grid-template-columns: 57px 88px 87px 88px 88px 173px 76px 47px 55px 53px 85px 66px 109px 45px 1fr 8px;
    height: 18px;
    flex: none;
    border-top: 1px solid #a0a9b2;
    border-bottom: 1px solid #b9e8b9;
    font-size: 12px;
    line-height: 20px;
    text-align: center;
  }

  .status > * {
    border-right: 1px solid #a0a9b2;
    white-space: nowrap;
    overflow: hidden;
  }

  .status > :last-child { border-right: 0; }

  .status .on {
    font-weight: bold;
    background: #dcebf8;
  }

  .status .layer {
    display: flex;
    align-items: center;
    gap: 2px;
    padding-left: 3px;
  }

  .layer i {
    width: 14px;
    height: 14px;
    background: #000;
  }

  .status .memory {
    padding-left: 3px;
    text-align: left;
  }
</style>
